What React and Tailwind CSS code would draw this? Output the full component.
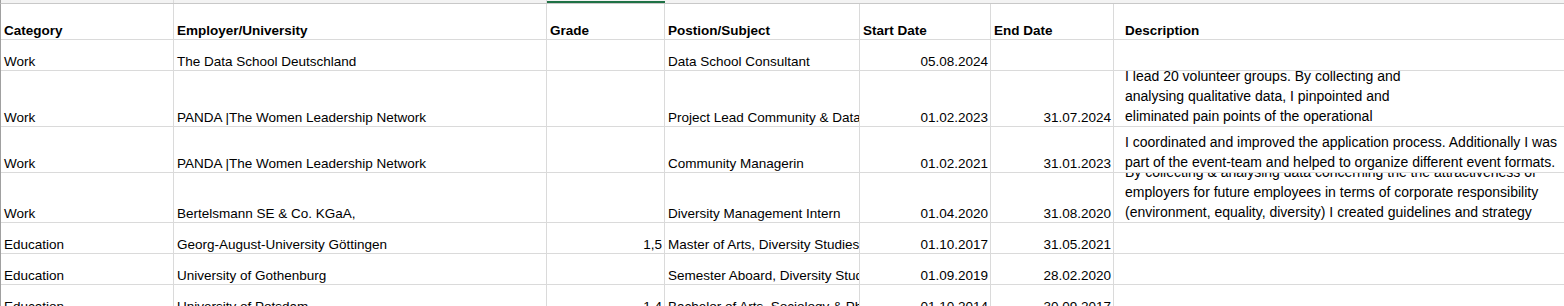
import React from "react";

// column template shared by every row of the sheet
const cols = "grid grid-cols-[173px_373px_118px_195px_131px_123px_1fr]";

const headers = ["Category", "Employer/University", "Grade", "Postion/Subject", "Start Date", "End Date", "Description"];

const rows = [
  {
    h: "h-[31px]",
    cells: ["Work", "The Data School Deutschland", "", "Data School Consultant", "05.08.2024", ""],
    desc: [],
  },
  {
    h: "h-[56px]",
    cells: ["Work", "PANDA |The Women Leadership Network", "", "Project Lead Community & Data Science", "01.02.2023", "31.07.2024"],
    desc: [
      "I lead 20 volunteer groups. By collecting and",
      "analysing qualitative data, I pinpointed and",
      "eliminated pain points of the operational",
    ],
  },
  {
    h: "h-[46px]",
    cells: ["Work", "PANDA |The Women Leadership Network", "", "Community Managerin", "01.02.2021", "31.01.2023"],
    desc: [
      "I coordinated and improved the application process. Additionally I was",
      "part of the event-team and helped to organize different event formats.",
    ],
  },
  {
    h: "h-[50px]",
    cells: ["Work", "Bertelsmann SE & Co. KGaA,", "", "Diversity Management Intern", "01.04.2020", "31.08.2020"],
    desc: [
      "By collecting & analysing data concerning the the attractiveness of",
      "employers for future employees in terms of corporate responsibility",
      "(environment, equality, diversity) I created guidelines and strategy",
    ],
  },
  {
    h: "h-[31px]",
    cells: ["Education", "Georg-August-University Göttingen", "1,5", "Master of Arts, Diversity Studies", "01.10.2017", "31.05.2021"],
    desc: [],
  },
  {
    h: "h-[31px]",
    cells: ["Education", "University of Gothenburg", "", "Semester Aboard, Diversity Studies", "01.09.2019", "28.02.2020"],
    desc: [],
  },
  {
    h: "h-[31px]",
    cells: ["Education", "University of Potsdam", "1,4", "Bachelor of Arts, Sociology & Philosophy", "01.10.2014", "30.09.2017"],
    desc: [],
  },
];

// numeric columns are right aligned like Excel does
const rightAligned = [false, false, true, false, true, true];

const Cell = ({ children, right, bold }) => (
  <div
    className={`flex items-end overflow-hidden whitespace-nowrap border-r border-[#dadada] px-[3px] leading-[16px] ${
      right ? "justify-end pr-[2px]" : ""
    } ${bold ? "font-bold" : ""}`}
  >
    <span className={right ? "" : "block"}>{children}</span>
  </div>
);

export default function App() {
  return (
    <div className="w-[1564px] h-[306px] overflow-hidden bg-white text-[13.5px] text-black font-['Liberation_Sans',Arial,sans-serif]">
      {/* bottom edge of the column header bar */}
      <div className={`${cols} h-[4px] bg-[#f3f3f3] border-b border-[#c8c8c8] border-l border-l-[#a0a0a0]`}>
        <div className="border-r border-[#dadada]" />
        <div className="border-r border-[#dadada]" />
        <div className="pt-px">
          <div className="h-[2px] bg-[#1e7145]" />
        </div>
        <div />
        <div />
        <div />
        <div />
      </div>

      <div className="border-l border-[#a0a0a0]">
        {/* header row */}
        <div className={`${cols} h-[36px] border-b border-[#dadada]`}>
          {headers.slice(0, 6).map((h) => (
            <Cell key={h} bold>
              {h}
            </Cell>
          ))}
          <div className="flex items-end pl-[11px] font-bold leading-[16px]">{headers[6]}</div>
        </div>

        {rows.map((r, i) => (
          <div key={i} className={`${cols} ${r.h} border-b border-[#dadada]`}>
            {r.cells.map((c, j) => (
              <Cell key={j} right={rightAligned[j]}>
                {c}
              </Cell>
            ))}
            <div className="flex flex-col justify-end overflow-hidden pl-[11px] text-[14px] leading-5 whitespace-nowrap">
              {r.desc.map((line, k) => (
                <div key={k}>{line}</div>
              ))}
            </div>
          </div>
        ))}
      </div>
    </div>
  );
}
